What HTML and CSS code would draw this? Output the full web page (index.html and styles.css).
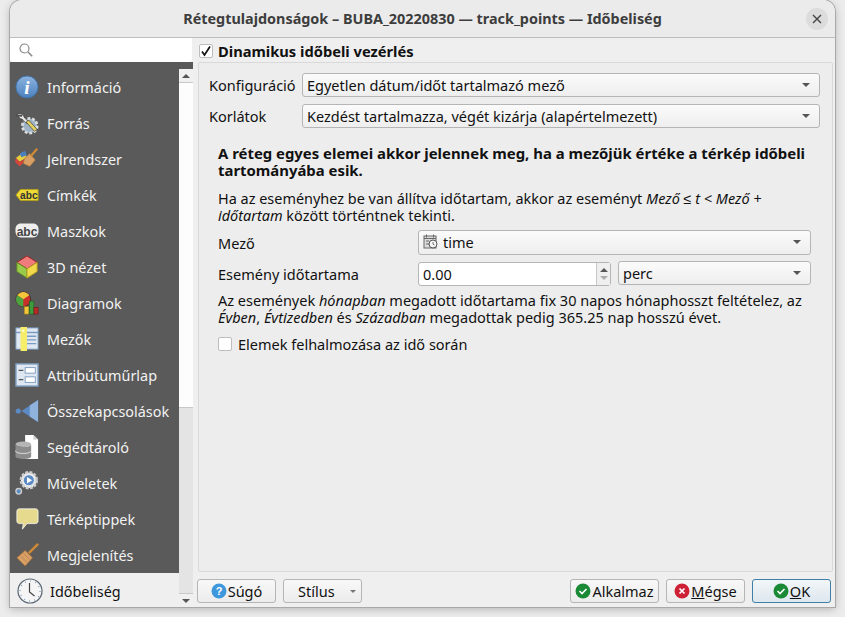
FILE: index.html
```html
<!DOCTYPE html>
<html lang="hu">
<head>
    <meta charset="UTF-8">
    <title>Rétegtulajdonságok</title>
    <link rel="stylesheet" href="styles.css">
</head>
<body>
<div class="window">

    <!-- Title bar -->
    <header class="titlebar">
        <span class="title">Rétegtulajdonságok – BUBA_20220830 — track_points — Időbeliség</span>
        <button class="close">
            <svg width="12" height="12" viewBox="0 0 12 12"><path d="M2 2l8 8M10 2l-8 8" stroke="#444" stroke-width="1.4"/></svg>
        </button>
    </header>

    <div class="content">

        <!-- Sidebar -->
        <aside class="side">
            <div class="search">
                <svg width="14" height="14" viewBox="0 0 14 14"><circle cx="5.5" cy="5.5" r="4.5" fill="none" stroke="#8a8a8a" stroke-width="1.2"/><path d="M9 9l4.2 4.2" stroke="#8a8a8a" stroke-width="1.6"/></svg>
            </div>
            <div class="side-body">
                <ul class="menu">
                    <li><svg class="ico" viewBox="0 0 26 26"><defs><linearGradient id="gi" x1="0" y1="0" x2="0" y2="1"><stop offset="0" stop-color="#8db4e0"/><stop offset="1" stop-color="#4a80bd"/></linearGradient></defs><circle cx="13" cy="13" r="12" fill="url(#gi)" stroke="#3f6fa6"/><text class="ico-i" x="13" y="21" text-anchor="middle">i</text></svg>Információ</li>
                    <li><svg class="ico" viewBox="0 0 26 26"><circle cx="16" cy="16" r="8" fill="#9fb3c8" stroke="#ddd" stroke-width="3" stroke-dasharray="3 2"/><path d="M1 5c3-3 6-3 8-1l1 3 5 5-2 2-5-5-3-1-1-3 3 1 1-2z" fill="#e8e8e8" stroke="#333" stroke-width=".7"/><path d="M12 12l9 10 3-2-9-10z" fill="#e3cf62" stroke="#4a4a2a" stroke-width=".8"/></svg>Forrás</li>
                    <li><svg class="ico" viewBox="0 0 26 26"><path d="M1 12l9-7 3 6-8 5z" fill="#e5cf3c"/><path d="M1 12l4 4 6-3-1 3-5 5-5-5z" fill="#d6453d"/><path d="M5 7l6-3 2 5-6 2z" fill="#4a7fbe"/><path d="M10 13l6-6 6 7-6 7-7-3z" fill="#d9a066" stroke="#a36d37" stroke-width=".7"/><path d="M17 10l7-8" stroke="#d08a35" stroke-width="2.4"/></svg>Jelrendszer</li>
                    <li><svg class="ico" viewBox="0 0 26 26"><path d="M1 13l5-6h19v12H6z" fill="#efd936" stroke="#b49f1a"/><text class="ico-abc" x="15" y="17" text-anchor="middle">abc</text></svg>Címkék</li>
                    <li><svg class="ico ico-wide" viewBox="0 0 27 26"><path d="M7 5h13c4 0 6 3 6 6v2c0 4-2 7-6 7H7c-4 0-6-3-6-7v-2c0-3 2-6 6-6z" fill="#eee"/><text class="ico-mask" x="13.500" y="18" text-anchor="middle">abc</text></svg>Maszkok</li>
                    <li><svg class="ico" viewBox="0 0 26 26"><path d="M13 1l11 7-11 7L2 8z" fill="#ef7b7b" stroke="#a51f1f"/><path d="M2 8l11 7v10L2 18z" fill="#9bcb4a" stroke="#5f8a22"/><path d="M24 8l-11 7v10l11-7z" fill="#f1d94b" stroke="#b49f1a"/></svg>3D nézet</li>
                    <li><svg class="ico" viewBox="0 0 26 26"><circle cx="9" cy="9" r="8" fill="#c9302c" stroke="#222" stroke-width=".7"/><path d="M9 9L2.500 4.500A8 8 0 0 1 15.500 4.500z" fill="#f1c63a"/><path d="M9 9V17A8 8 0 0 1 1 9 8 8 0 0 1 2.500 4.500z" fill="#4da33f"/><rect x="10" y="17" width="5" height="8" fill="#f1c63a" stroke="#9a7d12" stroke-width=".6"/><rect x="15.500" y="11" width="5" height="14" fill="#3d9a3d" stroke="#1d5a1d" stroke-width=".6"/><rect x="20.500" y="18" width="4.500" height="7" fill="#b72b26" stroke="#6a1512" stroke-width=".6"/></svg>Diagramok</li>
                    <li><svg class="ico" viewBox="0 0 26 26"><rect x="1" y="1" width="24" height="23" fill="#dfe8f2" stroke="#7a9bbf"/><path d="M1 6h24M10 10h13M10 14h13M10 18h13" stroke="#7a9bbf" stroke-width="1.500"/><rect x="6" y="0" width="7" height="26" fill="#f6ee6a"/><rect x="8" y="3" width="2" height="2" fill="#fff"/></svg>Mezők</li>
                    <li><svg class="ico" viewBox="0 0 26 26"><rect x="1" y="1" width="24" height="24" fill="#dfe8f2" stroke="#7a9bbf" stroke-width="1.500"/><rect x="11" y="5" width="11" height="6" fill="#fff" stroke="#7a9bbf"/><rect x="11" y="15" width="11" height="6" fill="#fff" stroke="#7a9bbf"/><path d="M4 8h5M4 18h5" stroke="#555" stroke-width="1.500"/></svg>Attribútuműrlap</li>
                    <li><svg class="ico" viewBox="0 0 26 26"><circle cx="3.500" cy="13" r="2.800" fill="#5b8ac4"/><path d="M7 13L25 1v24z" fill="#5b8ac4"/><path d="M25 1v24l-9-6V7z" fill="#8fb3dd"/></svg>Összekapcsolások</li>
                    <li><svg class="ico" viewBox="0 0 26 26"><path d="M11 0h9l5 5v21H11z" fill="#fff"/><path d="M20 0l5 5h-5z" fill="#ccc"/><ellipse cx="9" cy="10" rx="8.500" ry="3" fill="#b5b5b5"/><path d="M.5 10v13c0 2 4 3 8.500 3s8.500-1 8.500-3V10c0 2-4 3-8.500 3S.5 12 .5 10z" fill="#8c8c8c"/><path d="M.5 17c0 2 4 3 8.500 3s8.500-1 8.500-3" fill="none" stroke="#e6e6e6"/></svg>Segédtároló</li>
                    <li><svg class="ico" viewBox="0 0 26 26"><circle cx="15" cy="10" r="8.500" fill="#f2f2f2" stroke="#ccc" stroke-width="3" stroke-dasharray="3 1.500"/><circle cx="15" cy="10" r="6" fill="#5b8ac4" stroke="#eee"/><path d="M13 6.500l5.500 3.500-5.500 3.500z" fill="#fff"/><circle cx="4" cy="22" r="3" fill="#5b8ac4" stroke="#ccc" stroke-width="1.500"/></svg>Műveletek</li>
                    <li><svg class="ico" viewBox="0 0 26 26"><path d="M5 2h17c2 0 3 1 3 3v10c0 2-1 3-3 3H13l-5 6 1-6H5c-2 0-3-1-3-3V5c0-2 1-3 3-3z" fill="#e6da8e" stroke="#fff" stroke-width=".8"/></svg>Térképtippek</li>
                    <li><svg class="ico" viewBox="0 0 26 26"><path d="M2 16l9-8 8 8-8 9z" fill="#d9a066" stroke="#a36d37" stroke-width=".8"/><path d="M6 14l7 7M9 11l7 7" stroke="#b47f45" stroke-width=".8"/><path d="M15 11l10-10" stroke="#d08a35" stroke-width="2.600"/></svg>Megjelenítés</li>
                    <li class="selected"><svg class="ico ico-clock" viewBox="0 0 26 26"><circle cx="13" cy="13" r="12" fill="#f5f5f5" stroke="#5a6672" stroke-width="1.200"/><circle cx="13" cy="13" r="10" fill="none" stroke="#7a9bbf" stroke-width="1.200" stroke-dasharray="1 4.200"/><path d="M12.500 5v9l5 4" fill="none" stroke="#444" stroke-width="1.200"/></svg>Időbeliség</li>
                </ul>
                <div class="scrollbar">
                    <div class="scroll-btn"><span class="arrow-up"></span></div>
                    <div class="scroll-thumb"></div>
                    <div class="scroll-track"></div>
                    <div class="scroll-btn down"><span class="arrow-down"></span></div>
                </div>
            </div>
        </aside>

        <!-- Main panel -->
        <main class="main">
            <div class="group-head">
                <span class="check checked">
                    <svg width="12" height="12" viewBox="0 0 12 12"><path d="M2 6.500l2.500 3.500L10 1.500" fill="none" stroke="#111" stroke-width="1.700"/></svg>
                </span>
                <strong>Dinamikus időbeli vezérlés</strong>
            </div>

            <section class="group">
                <div class="config-row">
                    <label>Konfiguráció</label>
                    <div class="combo">Egyetlen dátum/időt tartalmazó mező<span class="arrow-down"></span></div>
                </div>
                <div class="config-row">
                    <label>Korlátok</label>
                    <div class="combo">Kezdést tartalmazza, végét kizárja (alapértelmezett)<span class="arrow-down"></span></div>
                </div>

                <div class="details">
                    <div class="lead">
                        <span class="line">A réteg egyes elemei akkor jelennek meg, ha a mezőjük értéke a térkép időbeli</span>
                        <span class="line">tartományába esik.</span>
                    </div>
                    <div class="note">
                        <span class="line">Ha az eseményhez be van állítva időtartam, akkor az eseményt <em>Mező ≤ t &lt; Mező +</em></span>
                        <span class="line"><em>időtartam</em> között történtnek tekinti.</span>
                    </div>

                    <div class="field-row first">
                        <label>Mező</label>
                        <div class="combo">
                            <span class="combo-val">
                                <svg width="15" height="15" viewBox="0 0 15 15"><rect x="1" y="2" width="12" height="12" fill="#ddd" stroke="#666"/><path d="M1 4.500h12M3.500 0.500v3M10.500 0.500v3M3 7h3M3 10h3" stroke="#666"/><circle cx="10" cy="10" r="4" fill="#f5f5f5" stroke="#555"/><path d="M10 8v2.200l1.500 .8" fill="none" stroke="#555" stroke-width=".8"/></svg>
                                time
                            </span>
                            <span class="arrow-down"></span>
                        </div>
                    </div>
                    <div class="field-row">
                        <label>Esemény időtartama</label>
                        <div class="duration">
                            <div class="spin">
                                <span class="spin-val">0.00</span>
                                <span class="spin-btns"><span class="arrow-up"></span><span class="arrow-down light"></span></span>
                            </div>
                            <div class="combo">perc<span class="arrow-down"></span></div>
                        </div>
                    </div>

                    <div class="foot-note">
                        <span class="line">Az események <em>hónapban</em> megadott időtartama fix 30 napos hónaphosszt feltételez, az</span>
                        <span class="line"><em>Évben</em>, <em>Évtizedben</em> és <em>Században</em> megadottak pedig 365.25 nap hosszú évet.</span>
                    </div>

                    <div class="accumulate">
                        <span class="check"></span>
                        Elemek felhalmozása az idő során
                    </div>
                </div>
            </section>

            <!-- Dialog buttons -->
            <footer class="buttons">
                <button class="btn btn-help">
                    <svg class="btn-ico" viewBox="0 0 16 16"><circle cx="8" cy="8" r="7.500" fill="#3f97dc"/><text class="ico-q" x="8" y="12" text-anchor="middle">?</text></svg>Súgó
                </button>
                <button class="btn btn-style">Stílus<span class="arrow-down small"></span></button>
                <span class="spacer"></span>
                <button class="btn btn-apply">
                    <svg class="btn-ico" viewBox="0 0 16 16"><circle cx="8" cy="8" r="7.500" fill="#1b8a36"/><path d="M4.500 8l2.500 2.500 4.500-4.500" fill="none" stroke="#fff" stroke-width="1.600"/></svg>Alkalmaz
                </button>
                <button class="btn btn-cancel">
                    <svg class="btn-ico" viewBox="0 0 16 16"><circle cx="8" cy="8" r="7.500" fill="#cf2136"/><path d="M5.500 5.500l5 5M10.500 5.500l-5 5" stroke="#fff" stroke-width="1.700"/></svg><span><u>M</u>égse</span>
                </button>
                <button class="btn btn-ok">
                    <svg class="btn-ico" viewBox="0 0 16 16"><circle cx="8" cy="8" r="7.500" fill="#1b8a36"/><path d="M4.500 8l2.500 2.500 4.500-4.500" fill="none" stroke="#fff" stroke-width="1.600"/></svg><span><u>O</u>K</span>
                </button>
            </footer>
        </main>
    </div>
</div>
</body>
</html>
```

FILE: styles.css
```css
* {
    box-sizing: border-box;
}
html, body {
    height: 100%;
}
body {
    margin: 0;
    background-color: #ececec;
    font-family: "Noto Sans", sans-serif;
    font-size: 14.5px;
    color: #111;
    overflow: hidden;
}
.window {
    width: 825px;
    height: 607px;
    margin-left: 10px;
    display: flex;
    flex-direction: column;
    background: #efefef;
    border-radius: 12px 12px 0 0;
    box-shadow: 0 0 0 1px #a8a8a8, 0 2px 8px rgba(0, 0, 0, 0.25);
    overflow: hidden;
}

/* title bar */
.titlebar {
    height: 38px;
    flex: none;
    display: flex;
    align-items: center;
    justify-content: center;
    background: #ebebeb;
    border-bottom: 1px solid #bdbdbd;
    position: relative;
}
.title {
    font-weight: 700;
    font-size: 14.4px;
    color: #3d3d3d;
}
.close {
    position: absolute;
    right: 7px;
    top: 8px;
    width: 22px;
    height: 22px;
    padding: 0;
    border: none;
    border-radius: 50%;
    background: #dcdcdc;
    display: flex;
    align-items: center;
    justify-content: center;
}

.content {
    flex: 1;
    display: flex;
    min-height: 0;
}

/* sidebar */
.side {
    width: 183px;
    flex: none;
    display: flex;
    flex-direction: column;
    min-height: 0;
}
.search {
    height: 24px;
    flex: none;
    width: 182px;
    background: #fff;
    border-radius: 0 0 3px 3px;
    padding: 5px 0 0 9px;
}
.search svg {
    display: block;
}
.side-body {
    flex: 1;
    display: flex;
    min-height: 0;
    background: #5a5a5a;
}
.menu {
    flex: 1;
    list-style: none;
    margin: 0;
    padding: 7px 0 0;
    overflow: hidden;
}
.menu li {
    height: 36px;
    display: flex;
    align-items: center;
    gap: 8px;
    padding-left: 5px;
    color: #f2f2f2;
    font-size: 14.4px;
    white-space: nowrap;
}
.menu li.selected {
    background: #efefef;
    color: #111;
    padding-left: 7px;
}
.ico {
    width: 24px;
    height: 24px;
    flex: none;
}
.ico-wide {
    width: 26px;
    margin: 0 -1px 0 -1px;
}
.ico-clock {
    width: 26px;
    height: 26px;
    margin-right: -1px;
}
.ico-i {
    font: italic 700 21px "Liberation Serif", serif;
    fill: #fff;
}
.ico-abc {
    font: 700 11px "Liberation Sans", sans-serif;
    fill: #333;
}
.ico-mask {
    font: 700 13px "Liberation Sans", sans-serif;
    fill: #444;
}
.ico-q {
    font: 700 11px "Liberation Sans", sans-serif;
    fill: #fff;
}

/* scrollbar */
.scrollbar {
    width: 14px;
    flex: none;
    margin-top: 7px;
    display: flex;
    flex-direction: column;
    background: #e4e4e4;
}
.scroll-btn {
    height: 14px;
    flex: none;
    background: #f0f0f0;
    border-bottom: 1px solid #c8c8c8;
    display: flex;
    align-items: center;
    justify-content: center;
}
.scroll-btn.down {
    border-bottom: none;
    border-top: 1px solid #c8c8c8;
}
.scroll-thumb {
    height: 325px;
    flex: none;
    background: #fdfdfd;
    border-bottom: 1px solid #c8c8c8;
}
.scroll-track {
    flex: 1;
}
.arrow-up, .arrow-down {
    display: inline-block;
    width: 0;
    height: 0;
    border-left: 4px solid transparent;
    border-right: 4px solid transparent;
}
.arrow-up {
    border-bottom: 4px solid #555;
}
.arrow-down {
    border-top: 4px solid #555;
}
.arrow-down.light {
    border-top-color: #aaa;
}
.arrow-down.small {
    border-left-width: 3px;
    border-right-width: 3px;
    border-top-width: 3px;
    border-top-color: #777;
}

/* main panel */
.main {
    flex: 1;
    min-width: 0;
    display: flex;
    flex-direction: column;
    padding: 0 2px 0 5px;
}
.group-head {
    height: 24px;
    flex: none;
    display: flex;
    align-items: center;
    gap: 5px;
    padding: 2px 0 0 1px;
}
.group-head strong {
    font-size: 14.7px;
}
.check {
    width: 14px;
    height: 14px;
    flex: none;
    background: #fff;
    border: 1px solid #bdbdbd;
    border-radius: 2px;
    display: flex;
    align-items: center;
    justify-content: center;
}
.group {
    height: 510px;
    flex: none;
    background: #ededed;
    border: 1px solid #d9d9d9;
    border-radius: 2px;
    padding: 10px 12px 0 10px;
}
.config-row {
    display: flex;
    align-items: center;
    height: 24px;
    margin-bottom: 7px;
}
.config-row label {
    width: 93px;
    flex: none;
}
.combo {
    flex: 1;
    height: 100%;
    display: flex;
    align-items: center;
    justify-content: space-between;
    padding: 0 9px 0 4px;
    background: linear-gradient(#fbfbfb, #eeeeee);
    border: 1px solid #b5b5b5;
    border-radius: 3px;
    white-space: nowrap;
}
.details {
    padding: 10px 9px 0;
}
.line {
    display: block;
    height: 17px;
    line-height: 17px;
    white-space: nowrap;
}
.line em {
    display: inline-block;
    line-height: 17px;
}
.note {
    margin-top: 11px;
    font-size: 14.45px;
}
.lead {
    font-weight: 700;
    font-size: 14.9px;
}
.field-row {
    display: flex;
    align-items: center;
    height: 25px;
    margin-top: 6px;
}
.field-row label {
    width: 200px;
    flex: none;
}
.first .combo {
    padding-bottom: 2px;
}
.combo-val {
    display: flex;
    align-items: center;
    gap: 5px;
}
.duration {
    flex: 1;
    height: 100%;
    display: flex;
    gap: 7px;
}
.duration .combo {
    height: 24px;
    padding-bottom: 1px;
}
.spin {
    width: 193px;
    height: 24px;
    margin-top: 1px;
    flex: none;
    display: flex;
    background: #fff;
    border: 1px solid #b5b5b5;
    border-radius: 3px;
}
.spin-val {
    flex: 1;
    align-self: center;
    padding-left: 4px;
}
.spin-btns {
    width: 14px;
    background: #efefef;
    border-left: 1px solid #c8c8c8;
    display: flex;
    flex-direction: column;
    align-items: center;
    justify-content: center;
    gap: 4px;
}
.foot-note {
    margin-top: 6px;
}
.accumulate {
    margin-top: 9px;
    display: flex;
    align-items: center;
    gap: 6px;
    height: 17px;
}

/* dialog buttons */
.buttons {
    flex: 1;
    display: flex;
    align-items: flex-start;
    gap: 7px;
    padding-top: 7px;
    margin: 0 2px 0 -1px;
}
.spacer {
    flex: 1;
}
.btn {
    height: 24px;
    width: 79px;
    padding: 0;
    display: flex;
    align-items: center;
    justify-content: center;
    gap: 1px;
    font: inherit;
    color: #111;
    background: linear-gradient(#f8f8f8, #ececec);
    border: 1px solid #b5b5b5;
    border-radius: 3px;
}
.btn-ico {
    width: 16px;
    height: 16px;
    flex: none;
}
.btn-apply {
    width: 89px;
}
.btn-style {
    justify-content: flex-start;
    padding-left: 14px;
}
.btn-style .arrow-down {
    margin-left: auto;
    margin-right: 5px;
}
.btn-ok {
    background: linear-gradient(#f2f6f9, #dde7ee);
    border-color: #3f7ea6;
}
```
